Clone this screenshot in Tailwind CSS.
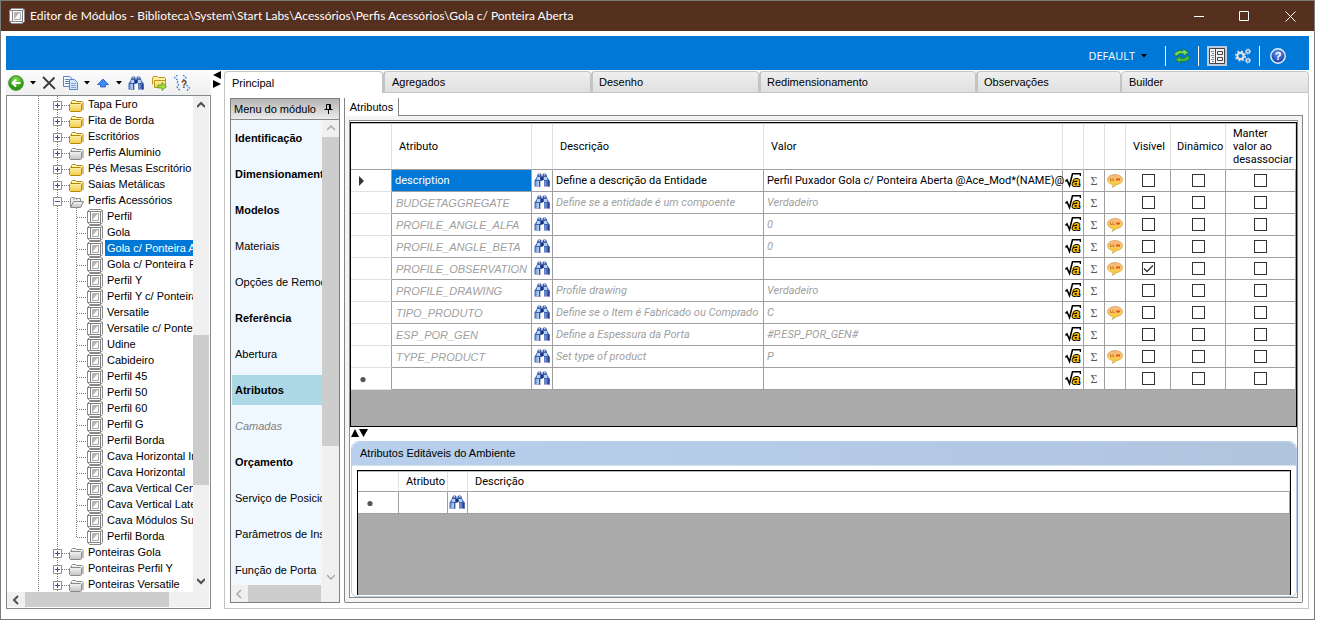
<!DOCTYPE html>
<html lang="pt-BR">

<head>
  <meta charset="UTF-8">
  <meta name="viewport" content="width=device-width, initial-scale=1.0">
  <script src="https://cdn.jsdelivr.net/npm/@tailwindcss/browser@4"></script>
  <title>Editor de Módulos</title>
</head>

<body class="h-screen flex flex-col pr-[3px] pb-1 bg-white text-black text-[11px] leading-4 font-['Liberation_Sans',Arial,sans-serif] overflow-hidden">
  <!-- icons -->
  <svg class="absolute size-0">
    <linearGradient id="gBlue" x1="0" x2="1"><stop offset="0" stop-color="#6f9cd8"/><stop offset=".4" stop-color="#e8f3ff"/><stop offset="1" stop-color="#2c4ca4"/></linearGradient>
    <linearGradient id="gYellow" x2="0" y2="1"><stop offset="0" stop-color="#fff0a8"/><stop offset="1" stop-color="#efc94c"/></linearGradient>
    <linearGradient id="gGray" x2="0" y2="1"><stop offset="0" stop-color="#f4f4f4"/><stop offset="1" stop-color="#c4c4c4"/></linearGradient>
    <linearGradient id="gOrange" x2="0" y2="1"><stop offset="0" stop-color="#f8b488"/><stop offset=".5" stop-color="#fcc860"/><stop offset="1" stop-color="#ffcc00"/></linearGradient>
    <radialGradient id="gGreen" cy=".3"><stop offset="0" stop-color="#8be05a"/><stop offset="1" stop-color="#2f9a14"/></radialGradient>
    <radialGradient id="gHelp" cy=".3"><stop offset="0" stop-color="#6f9cf0"/><stop offset="1" stop-color="#2450b8"/></radialGradient>
    <symbol id="binoculars" viewBox="0 0 16 14">
      <path d="M3.500 1.500 4.500.500h2l1 1V13.500h-.5v-5h-1v5h-5.500v-6l2-3z" fill="#3c62b4"/>
      <path d="M12.500 1.500 11.500.500h-2l-1 1v5.500h1.500v6.500h5.500v-6l-2-3z" fill="#3c62b4"/>
      <path d="M1.500 8h4v5H1.500zM10.500 8h4v5h-4z" fill="url(#gBlue)"/>
      <path d="M3.500 3.500h2.500v3.500H2.500zM10 3.500h2.500l1 3.500H10z" fill="#b4d2f4"/>
      <path d="M4.500 1.200h1.500v1.300H4.500zM10 1.200h1.500v1.300H10z" fill="#e4f0fc"/>
      <path d="M7 3.500h2v4H7zM3.500 2.700h3v.8h-3zM9.500 2.700h3v.8h-3z" fill="#1b2f80"/>
      <path d="M6 8h4v6H6z" fill="#fff"/>
      <path d="M5.300 7.500h1v6.200h-1zM14.500 7.500h1v6.200h-1z" fill="#1b2f80"/>
    </symbol>
    <symbol id="folder" viewBox="0 0 15 12">
      <path d="M2.500 3.500V1.500l1-1h3l1 1h5.500l1 1V10" fill="#fff3b8" stroke="#b8860b"/>
      <path d="M.500 4.500 1.500 3.500h10l1 1v6l-1 1h-10l-1-1z" fill="url(#gYellow)" stroke="#b8860b"/>
    </symbol>
    <symbol id="folder-gray" viewBox="0 0 15 12">
      <path d="M2.500 3.500V1.500l1-1h3l1 1h5.500l1 1V10" fill="#f2f2f2" stroke="#8a8a8a"/>
      <path d="M.500 4.500 1.500 3.500h10l1 1v6l-1 1h-10l-1-1z" fill="url(#gGray)" stroke="#8a8a8a"/>
    </symbol>
    <symbol id="folder-open" viewBox="0 0 15 12">
      <path d="M1.500 11V2.500l1-1h3l1 1h5v3" fill="#eee" stroke="#8a8a8a"/>
      <path d="M1.500 11.500 4.500 5.500h10l-3 6z" fill="url(#gGray)" stroke="#8a8a8a"/>
      <path d="M4 4 6 2M7 4l2-2" stroke="#aaa"/>
    </symbol>
    <symbol id="module" viewBox="0 0 16 16">
      <path d="M.500 2.500 2.500.500h11l2 1v12l-2 2h-11l-2-2z" fill="#fff" stroke="#8a8a8a"/>
      <path d="M3.500 2.500h10v11h-10z" fill="#fff" stroke="#808080"/>
      <path d="M.500 2.500h3M13.500 2.500l2-1M13.500 13.500v2M.500 13.500h3" stroke="#808080"/>
      <path d="M5 4h6.500L5 11.500z" fill="#b4b4b4"/>
      <path d="M5 11.500 11.500 4v7.500z" fill="#fafafa"/>
      <path d="M5 11.500h6.500V4" fill="none" stroke="#a8a8a8"/>
    </symbol>
    <symbol id="root" viewBox="0 0 16 15">
      <path d="M.500 8.500 2 7 4.500 12.500 7.500 .800H15.500V3" fill="none" stroke="#000" stroke-width="1.600"/>
      <text x="7.500" y="12.500" font-family="Liberation Sans" font-size="13" font-weight="bold" font-style="italic" fill="#ffc800" stroke="#000" stroke-width="2" paint-order="stroke">a</text>
    </symbol>
    <symbol id="bubble" viewBox="0 0 16 14">
      <path d="M8 .500c4.200 0 7.500 2.200 7.500 5 0 2.800-2.300 4.500-5.500 5L5 13.500 6.500 10.600C3 10.300.500 8.300.500 5.500.500 2.700 3.800.500 8 .500z" fill="url(#gOrange)" stroke="#c8a050" stroke-width=".7"/>
      <path d="M3.500 4v2.500h2M6 4v2.500h1.500" fill="none" stroke="#c06a20" stroke-width=".8"/>
      <path d="M9 4.500h4v2H9z" fill="#e05a10"/>
    </symbol>
    <symbol id="caret" viewBox="0 0 6 4"><path d="M0 0h6L3 3.500z"/></symbol>
  </svg>

  <div class="flex-1 min-h-0 flex flex-col border border-[#7b7b7b]">
    <header class="h-[30px] flex items-center pl-2 bg-[#56301f] text-white">
      <svg class="size-4 mr-[5px]"><use href="#module"/></svg>
      <h1 class="flex-1 text-[12px] font-[Lato,'Open_Sans',sans-serif] whitespace-nowrap">Editor de Módulos - Biblioteca\System\Start Labs\Acessórios\Perfis Acessórios\Gola c/ Ponteira Aberta</h1>
      <button aria-label="Minimizar" class="w-[45px] grid place-items-center"><svg class="size-[11px]" fill="none" stroke="#fff"><path d="M0 5.500h10"/></svg></button>
      <button aria-label="Maximizar" class="w-[45px] grid place-items-center"><svg class="size-[11px]" fill="none" stroke="#fff"><path d="M.500.500h9v9h-9z"/></svg></button>
      <button aria-label="Fechar" class="w-[47px] grid place-items-center"><svg class="size-[11px]" fill="none" stroke="#fff"><path d="m.500.500 10 10M10.500.500l-10 10"/></svg></button>
    </header>

    <div class="flex-1 min-h-0 flex flex-col px-[5px] pt-[5px] pb-[10px]">
      <div class="h-[34px] shrink-0 flex items-center justify-end gap-2 pt-1.5 pr-[23px] bg-[#0078d7] text-white">
        <button class="flex items-center gap-1.5 pr-2.5 font-['Open_Sans','Noto_Sans',sans-serif]">DEFAULT<svg class="w-[6px] h-1"><use href="#caret"/></svg></button>
        <span class="w-px h-5 bg-white"></span>
        <button aria-label="Atualizar">
          <svg class="block size-4" stroke="#1d6e1c" stroke-width=".7"><path d="M.500 7.500C.500 4 4 2 9 3V.700L14.500 4.500 9.500 8V5.800C6.500 5 4 5.500 3 8z" fill="#7bdc54"/><path d="M15.500 8.500c0 4-4 5.500-9 4.500V15.300L1.500 11.500l5-3.500v2.300c3 .7 5 .2 6.500-2.300z" fill="#4fc03a"/></svg>
        </button>
        <span class="w-px h-5 bg-white"></span>
        <button aria-label="Painel" class="size-5 grid place-items-center bg-[#bccbdd]">
          <svg class="size-4" fill="#f4f4f4" stroke="#444"><path d="M.500.500h15v15H.500zM6.500.500v15M8.500 3.500h5v3h-5zM8.500 9.500h5v3h-5z"/><path d="M2 3.500h3M3 5.500h2M2 7.500h3M3 9.500h2M2 11.500h3M3 13.500h2" stroke="#888"/></svg>
        </button>
        <button aria-label="Configurações">
          <svg class="block size-4" fill="none" stroke="#dfe3ea"><circle cx="5.500" cy="8" r="3.200" stroke-width="2.200"/><circle cx="5.500" cy="8" r="4.800" stroke-width="1.600" stroke-dasharray="1.900 1.870"/><circle cx="13" cy="3.500" r="1.600" stroke-width="1.300"/><circle cx="13" cy="3.500" r="2.600" stroke-dasharray="1 1.040"/><circle cx="13" cy="12.500" r="1.600" stroke-width="1.300"/><circle cx="13" cy="12.500" r="2.600" stroke-dasharray="1 1.040"/></svg>
        </button>
        <span class="w-px h-5 bg-white"></span>
        <button aria-label="Ajuda" class="pl-0.5">
          <svg class="block size-4"><circle cx="8" cy="8" r="7.200" fill="url(#gHelp)" stroke="#e8eefc" stroke-width="1.400"/><text x="8" y="12" text-anchor="middle" font-size="11" font-weight="bold" fill="#fff">?</text></svg>
        </button>
      </div>

      <div class="flex-1 min-h-0 flex">
        <aside class="w-[205px] shrink-0 flex flex-col">
          <div class="h-[25px] shrink-0 flex items-center gap-1.5 pl-0.5 bg-linear-to-b from-[#fcfcfc] to-[#efefef]">
            <button aria-label="Voltar"><svg class="block size-4"><circle cx="8" cy="8" r="7.400" fill="url(#gGreen)" stroke="#38862a" stroke-width=".8"/><path d="M12.500 8H5M8 4.500 4.500 8 8 11.500" fill="none" stroke="#fff" stroke-width="2"/></svg></button>
            <button aria-label="Opções de voltar"><svg class="block w-[6px] h-1"><use href="#caret"/></svg></button>
            <button aria-label="Excluir"><svg class="block w-[14px] h-4" stroke="#3a3a3a" stroke-width="1.800"><path d="m1 2 12 12M12.500 2.500 1.500 13.500"/></svg></button>
            <button aria-label="Copiar"><svg class="block size-4" fill="#f2f8ff" stroke="#5b84c4"><path d="M1.500 1.500h6l2.500 2v8H1.500zM3 4.500h4M3 6.500h4M3 8.500h4"/><path d="M7.500 4.500h5l3 3v7h-8z" fill="#d6e6fa"/><path d="M9 8.500h5M9 10.500h5M9 12.500h5" stroke="#7fa4dc"/></svg></button>
            <button aria-label="Opções de copiar"><svg class="block w-[6px] h-1"><use href="#caret"/></svg></button>
            <button aria-label="Subir"><svg class="block w-[14px] h-4"><path d="M7 4 12.500 9.500H9.500v2.500h-5V9.500h-3z" fill="#3f8cf0" stroke="#1c58c8" stroke-width=".8"/></svg></button>
            <button aria-label="Opções de subir"><svg class="block w-[6px] h-1"><use href="#caret"/></svg></button>
            <button aria-label="Localizar"><svg class="block w-4 h-[14px]"><use href="#binoculars"/></svg></button>
            <button aria-label="Mover para pasta"><svg class="block size-4 overflow-visible"><path d="M2.500 9.500V3l1-1.500h4l1 1h6l1 1V10" fill="#fff0a0" stroke="#c0951c"/><path d="M4.500 5.500H15.500v7H4.500z" fill="url(#gYellow)" stroke="#c0951c"/><path d="M8 10h4V7.500l4.500 4-4.500 4V13H8z" fill="#a4dc3c" stroke="#4c8c14" stroke-width=".7"/></svg></button>
            <button aria-label="Dependências" class="pl-0.5"><svg class="block size-4" fill="none"><path d="M3.500 0 .500 2.500l3 2.500v3.500M9 0l3 2.500L9 5M5 9l-2 3 3 3.500M12.500 10l3 3-3 3" stroke="#3c7cd8" stroke-width="1.200" stroke-dasharray="2 1"/><text x="7" y="13" font-size="10" font-weight="bold" fill="#6b3a18">?</text></svg></button>
          </div>
          <div class="flex-1 min-h-0 flex flex-col border border-[#828790] pr-px pb-px">
            <div class="flex-1 min-h-0 flex">
              <ul id="tree" class="flex-1 min-w-0 overflow-hidden whitespace-nowrap"></ul>
              <div class="w-4 flex flex-col items-center bg-[#f0f0f0]">
                <svg class="w-2 h-5 mt-0.5 shrink-0" fill="none" stroke="#505050" stroke-width="2"><path d="m0 9 4-4 4 4"/></svg>
                <div class="grow-[214]"></div>
                <div class="w-full grow-[148] bg-[#cdcdcd]"></div>
                <div class="grow-[86]"></div>
                <svg class="w-2 h-5 shrink-0" fill="none" stroke="#505050" stroke-width="2"><path d="m0 7 4 4 4-4"/></svg>
              </div>
            </div>
            <div class="h-[15px] shrink-0 flex items-center bg-[#f0f0f0]">
              <svg class="w-[18px] h-3" fill="none" stroke="#505050" stroke-width="2"><path d="m11 2-4 4 4 4"/></svg>
              <div class="w-36 h-full bg-[#cdcdcd]"></div>
            </div>
          </div>
        </aside>

        <svg class="w-[13px] h-5 shrink-0"><path d="M10 1v8L2 5zM2 10v8l8-4z"/></svg>

        <section class="flex-1 min-w-0 flex flex-col pt-px">
          <nav class="h-[22px] shrink-0 flex text-left">
            <button class="w-[159px] pl-[7px] text-left border border-b-0 border-[#c4c4c4] rounded-t-sm bg-white">Principal</button>
            <button class="w-[208px] pl-[7px] text-left border border-l-2 border-[#c4c4c4] rounded-t-sm bg-linear-to-b from-[#efefef] to-[#e0e0e0]">Agregados</button>
            <button class="w-[168px] pl-[6px] text-left border border-l-2 border-[#c4c4c4] rounded-t-sm bg-linear-to-b from-[#efefef] to-[#e0e0e0]">Desenho</button>
            <button class="w-[217px] pl-[6px] text-left border border-l-2 border-[#c4c4c4] rounded-t-sm bg-linear-to-b from-[#efefef] to-[#e0e0e0]">Redimensionamento</button>
            <button class="w-[145px] pl-[6px] text-left border border-l-2 border-[#c4c4c4] rounded-t-sm bg-linear-to-b from-[#efefef] to-[#e0e0e0]">Observações</button>
            <button class="flex-1 pl-[7px] text-left border border-[#c4c4c4] rounded-t-sm bg-linear-to-b from-[#efefef] to-[#e0e0e0]">Builder</button>
          </nav>
          <div class="flex-1 min-h-0 flex gap-1 p-[5px] border border-t-0 border-[#c4c4c4]">
            <div class="w-[110px] flex flex-col border border-[#7f7f7f] bg-[#f0f8ff]">
              <div class="h-[21px] shrink-0 flex items-center justify-between pl-[3px] pr-1.5 border-b border-[#8a8a8a] bg-linear-to-b from-[#b4b4b4] to-[#ececec]">
                <h2>Menu do módulo</h2>
                <button aria-label="Fixar"><svg class="block w-[9px] h-3" fill="none" stroke="#000"><path d="M2.500 1.500h4v5h-4zM5.500 1.500v5M.500 6.500h8M4.500 7v4"/></svg></button>
              </div>
              <div class="flex-1 min-h-0 flex">
                <ul id="menu" class="flex-1 min-w-0 flex flex-col gap-1.5 pl-px pt-[3px] overflow-hidden whitespace-nowrap"></ul>
                <div class="w-[17px] flex flex-col items-center bg-[#f0f0f0]">
                  <svg class="w-2 h-[17px] shrink-0" fill="none" stroke="#a8a8a8" stroke-width="1.500"><path d="m0 10 4-4 4 4"/></svg>
                  <div class="w-full grow-[309] bg-[#cdcdcd]"></div>
                  <div class="grow-[122]"></div>
                  <svg class="w-2 h-[17px] shrink-0" fill="none" stroke="#a8a8a8" stroke-width="1.500"><path d="m0 7 4 4 4-4"/></svg>
                </div>
              </div>
              <div class="h-[17px] shrink-0 flex items-center bg-[#f0f0f0]">
                <svg class="w-[17px] h-3" fill="none" stroke="#a8a8a8" stroke-width="1.500"><path d="m10 2-4 4 4 4"/></svg>
                <div class="w-[73px] h-full bg-[#cdcdcd]"></div>
              </div>
            </div>

            <div class="flex-1 min-w-0 flex flex-col">
              <div class="h-[18px] shrink-0 flex">
                <button class="w-[55px] border-x border-[#858585]">Atributos</button>
                <span class="flex-1 border-b border-[#858585]"></span>
              </div>
              <div class="flex-1 min-h-0 p-1 border border-t-0 border-[#858585] rounded-b-xs bg-[#f4f4f4]">
                <div class="h-full flex flex-col pt-px border border-[#8c8c8c] bg-white">
                  <div class="shrink-0 pb-9 border border-[#000] bg-[#ababab]">
                    <table class="w-full table-fixed border-separate border-spacing-0 whitespace-nowrap bg-white font-[Roboto,'Liberation_Sans',sans-serif]">
                      <colgroup>
                        <col class="w-[41px]"><col class="w-[140px]"><col class="w-[21px]"><col class="w-[211px]"><col>
                        <col class="w-[21px]"><col class="w-[21px]"><col class="w-[21px]"><col class="w-[45px]"><col class="w-[55px]"><col class="w-[70px]">
                      </colgroup>
                      <thead>
                        <tr class="h-[47px] text-left leading-[13px] *:font-normal *:border-r *:border-b *:border-t *:border-r-[#e0e0e0] *:border-b-[#a0a0a0] *:border-t-[#b8b8b8]">
                          <th></th>
                          <th class="pl-[7px]">Atributo</th>
                          <th></th>
                          <th class="pl-[7px]">Descrição</th>
                          <th class="pl-[7px]">Valor</th>
                          <th></th>
                          <th></th>
                          <th></th>
                          <th class="pl-[7px]">Visível</th>
                          <th class="pl-[6px]">Dinâmico</th>
                          <th class="pl-[7px]">Manter<br>valor ao<br>desassociar</th>
                        </tr>
                      </thead>
                      <tbody id="attributes"></tbody>
                    </table>
                  </div>
                  <svg class="w-5 h-[14px] shrink-0"><path d="M1 10 5 2l4 8zM9 2h9l-4.500 8z"/></svg>
                  <div class="flex-1 min-h-0 flex flex-col ml-px border border-[#b8cfe9] rounded-t-lg rounded-b-md">
                    <h2 class="h-6 shrink-0 pl-2 leading-[22px] rounded-t-lg border-b border-[#d6e3f2] bg-linear-to-r from-[#b8d0ec] to-[#b0c4de]">Atributos Editáveis do Ambiente</h2>
                    <div class="flex-1 min-h-0 mt-1 ml-[5px] mr-[5px] mb-px border border-b-0 border-[#000] bg-[#ababab]">
                      <table class="w-full table-fixed border-separate border-spacing-0 bg-white font-[Roboto,'Liberation_Sans',sans-serif]">
                        <colgroup><col class="w-[41px]"><col class="w-[49px]"><col class="w-5"><col></colgroup>
                        <thead>
                          <tr class="h-[21px] text-left leading-[13px] *:font-normal *:border-r *:border-b *:border-t *:border-r-[#e0e0e0] *:border-b-[#a0a0a0] *:border-t-[#b8b8b8]">
                            <th></th>
                            <th class="pl-[7px]">Atributo</th>
                            <th></th>
                            <th class="pl-[7px]">Descrição</th>
                          </tr>
                        </thead>
                        <tbody>
                          <tr class="h-[22px] *:border-r *:border-b *:border-[#a0a0a0]">
                            <td class="pl-2"><svg class="block size-[9px]"><circle cx="4" cy="5.500" r="2.600" fill="#555"/></svg></td>
                            <td></td>
                            <td class="pl-px"><svg class="block w-4 h-[14px] mb-0.5"><use href="#binoculars"/></svg></td>
                            <td></td>
                          </tr>
                        </tbody>
                      </table>
                    </div>
                  </div>
                </div>
              </div>
            </div>
          </div>
        </section>
      </div>
    </div>
  </div>

  <script>
    const folders = [
      ['Tapa Furo', 'folder'],
      ['Fita de Borda', 'folder'],
      ['Escritórios', 'folder'],
      ['Perfis Aluminio', 'folder-gray'],
      ['Pés Mesas Escritório', 'folder'],
      ['Saias Metálicas', 'folder'],
      ['Perfis Acessórios', 'folder-open']
    ]
    const modules = ['Perfil', 'Gola', 'Gola c/ Ponteira Aberta', 'Gola c/ Ponteira Fechada', 'Perfil Y', 'Perfil Y c/ Ponteira', 'Versatile', 'Versatile c/ Ponteira', 'Udine', 'Cabideiro', 'Perfil 45', 'Perfil 50', 'Perfil 60', 'Perfil G', 'Perfil Borda', 'Cava Horizontal Inferior', 'Cava Horizontal', 'Cava Vertical Central', 'Cava Vertical Lateral', 'Cava Módulos Superior', 'Perfil Borda']
    const lastFolders = [['Ponteiras Gola', 'folder-gray'], ['Ponteiras Perfil Y', 'folder-gray'], ['Ponteiras Versatile', 'folder-gray']]

    const folderRow = ([name, icon]) => `
      <li class="h-4 flex">
        <svg class="w-[81px] h-4 shrink-0">
          <path d="M31.5 0v16M50.5 0v16M55 9.5h7" stroke="#808080" stroke-dasharray="1 1"/>
          <path d="M46.5 5.5h8v8h-8z" fill="#fff" stroke="#919191"/>
          <path d="${icon === 'folder-open' ? 'M48 9.5h5' : 'M48 9.5h5M50.5 7v5'}" stroke="#3c4f9c"/>
          <use href="#${icon}" x="62" y="4" width="15" height="12"/>
        </svg>${name}
      </li>`

    const moduleRow = (name, i) => `
      <li class="h-4 flex">
        <svg class="w-[98px] h-4 shrink-0 overflow-visible">
          <path d="M31.5 0v16M50.5 0v16M69.5 0v${i === modules.length - 1 ? 10 : 16}M70 9.5h10" stroke="#808080" stroke-dasharray="1 1"/>
          <use href="#module" x="80" y="1" width="16" height="16"/>
        </svg><span class="${i === 2 ? 'px-0.5 bg-[#0078d7] text-white' : 'px-0.5'}">${name}</span>
      </li>`

    document.querySelector('#tree').innerHTML =
      folders.map(folderRow).join('') + modules.map(moduleRow).join('') + lastFolders.map(folderRow).join('')

    const menuStyles = {
      bold: 'h-[30px] shrink-0 pl-[3px] leading-[30px] font-bold',
      normal: 'h-[30px] shrink-0 pl-[3px] leading-[30px]',
      active: 'h-[30px] shrink-0 pl-[3px] leading-[30px] font-bold bg-[#add8e6]',
      disabled: 'h-[30px] shrink-0 pl-[3px] leading-[30px] italic text-[#808080]'
    }
    const menu = [
      ['Identificação', 'bold'], ['Dimensionamento', 'bold'], ['Modelos', 'bold'], ['Materiais', 'normal'],
      ['Opções de Remoção', 'normal'], ['Referência', 'bold'], ['Abertura', 'normal'], ['Atributos', 'active'],
      ['Camadas', 'disabled'], ['Orçamento', 'bold'], ['Serviço de Posicionamento', 'normal'],
      ['Parâmetros de Inserção', 'normal'], ['Função de Porta', 'normal']
    ]
    document.querySelector('#menu').innerHTML = menu
      .map(([label, style]) => `<li class="${menuStyles[style]}"><a href="#">${label}</a></li>`).join('')

    // name, description, value, has comment, visible
    const attributes = [
      ['description', 'Define a descrição da Entidade', 'Perfil Puxador Gola c/ Ponteira Aberta @Ace_Mod*(NAME)@', true, false],
      ['BUDGETAGGREGATE', 'Define se a entidade é um compoente', 'Verdadeiro', false, false],
      ['PROFILE_ANGLE_ALFA', '', '0', true, false],
      ['PROFILE_ANGLE_BETA', '', '0', true, false],
      ['PROFILE_OBSERVATION', '', '', true, true],
      ['PROFILE_DRAWING', 'Profile drawing', 'Verdadeiro', false, false],
      ['TIPO_PRODUTO', 'Define se o Item é Fabricado ou Comprado', 'C', true, false],
      ['ESP_POR_GEN', 'Define a Espessura da Porta', '#P.ESP_POR_GEN#', false, false],
      ['TYPE_PRODUCT', 'Set type of product', 'P', true, false],
      ['', '', '', false, false]
    ]

    const checkbox = (label, checked) => `
      <label class="relative block size-[13px] mx-auto">
        <input type="checkbox" aria-label="${label}" class="peer block size-[13px] appearance-none border border-[#333] bg-white" ${checked ? 'checked' : ''}>
        <svg class="absolute inset-0 size-[13px] hidden peer-checked:block pointer-events-none" fill="none" stroke="#333"><path d="m2 6.500 3 3 6-6" stroke-width="1.300"/></svg>
      </label>`

    const marker = i => {
      if (i === 0) return '<svg class="block w-[7px] h-[10px]"><path d="M1 0v10l5-5z" fill="#333"/></svg>'
      if (i === attributes.length - 1) return '<svg class="block size-[9px]"><circle cx="5" cy="5.5" r="2.6" fill="#555"/></svg>'
      return ''
    }

    document.querySelector('#attributes').innerHTML = attributes.map(([name, desc, value, comment, visible], i) => `
      <tr class="${i === 0 ? 'h-[22px] *:border-r *:border-b *:border-[#a0a0a0]' : 'h-[22px] *:border-r *:border-b *:border-[#a0a0a0] italic text-[#a0a0a0]'}">
        <td class="pl-[7px] border-b-[#e0e0e0]!">${marker(i)}</td>
        <td class="${i === 0 ? 'pl-[3px] bg-[#0078d7] text-white' : "pl-1 font-['Liberation_Sans',Arial,sans-serif]"}">${name}</td>
        <td class="pl-0.5"><svg class="block w-4 h-[14px] mb-0.5"><use href="#binoculars"/></svg></td>
        <td class="pl-[3px]">${desc}</td>
        <td class="pl-[3px]">${value}</td>
        <td class="pl-0.5"><svg class="block w-4 h-[15px]"><use href="#root"/></svg></td>
        <td class="text-center not-italic text-[12px] text-[#555] font-['Liberation_Serif',serif]">Σ</td>
        <td class="pl-0.5">${comment ? '<svg class="block w-4 h-[14px]"><use href="#bubble"/></svg>' : ''}</td>
        <td>${checkbox('Visível', visible)}</td>
        <td>${checkbox('Dinâmico', false)}</td>
        <td>${checkbox('Manter valor ao desassociar', false)}</td>
      </tr>`).join('')
  </script>
</body>
</html>
